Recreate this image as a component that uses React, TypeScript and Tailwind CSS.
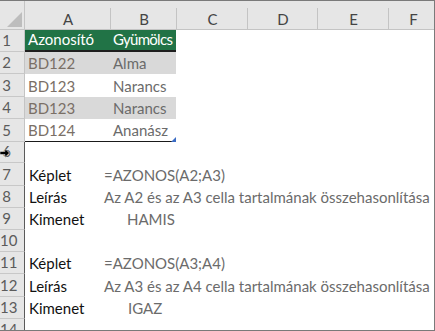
import React from "react";

const FONT = { fontFamily: "Lato, 'Open Sans', sans-serif" };

const rowHeights = [22, 22, 23, 22, 23, 21, 23, 22, 22, 22, 22, 23, 22];

const colHeaders = [
  { label: "A", w: "w-[86px]" },
  { label: "B", w: "w-[66px]" },
  { label: "C", w: "w-[71px]" },
  { label: "D", w: "w-[70px]" },
  { label: "E", w: "w-[71px]" },
];

function RowHeader({ n, dark, h }: { n: number; dark: boolean; h: number }) {
  return (
    <div
      className={`relative flex w-[25px] shrink-0 items-end border-b border-r border-b-[#c8c8c8] bg-[#e6e6e6] pb-[2px] ${
        dark ? "border-r-[#5a5a5a]" : "border-r-[#c4c4c4]"
      }`}
      style={{ height: h }}
    >
      <span className="w-[13px] text-center text-[15px] leading-[18px] text-[#5b5b5b]">{n}</span>
      {n === 6 && (
        <svg className="absolute left-0 top-[6px]" width="10" height="10" viewBox="0 0 10 10">
          <path d="M0 3.4H5V0.6L9.4 5L5 9.4V6.6H0Z" fill="#000" stroke="#fff" strokeWidth="0.5" />
        </svg>
      )}
    </div>
  );
}

function Cell({ children, className = "" }: { children?: React.ReactNode; className?: string }) {
  return <div className={`flex items-end pb-[2px] text-[15px] leading-[18px] whitespace-nowrap ${className}`}>{children}</div>;
}

export default function App() {
  const tableRows = [
    ["BD122", "Alma"],
    ["BD123", "Narancs"],
    ["BD123", "Narancs"],
    ["BD124", "Ananász"],
  ];
  const lower: Record<number, [string, string, string?]> = {
    7: ["Képlet", "=AZONOS(A2;A3)"],
    8: ["Leírás", "Az A2 és az A3 cella tartalmának összehasonlítása"],
    9: ["Kimenet", "HAMIS", "pl-[23px]"],
    11: ["Képlet", "=AZONOS(A3;A4)"],
    12: ["Leírás", "Az A3 és az A4 cella tartalmának összehasonlítása"],
    13: ["Kimenet", "IGAZ", "pl-[24px]"],
  };

  return (
    <div
      className="flex h-[331px] w-[435px] flex-col overflow-hidden border-b border-r border-t border-[#7a7a7a] bg-white"
      style={FONT}
    >
      {/* column headers */}
      <div className="flex h-[29px] shrink-0 border-b border-[#c4c4c4] bg-[#e6e6e6]">
        <div className="relative w-[25px] shrink-0 border-r border-[#c4c4c4]">
          <svg className="absolute left-[7px] top-[11px]" width="16" height="16" viewBox="0 0 16 16">
            <path d="M15 0V15H0Z" fill="#bdbdbd" />
          </svg>
        </div>
        {colHeaders.map((c) => (
          <div key={c.label} className={`relative flex ${c.w} shrink-0 items-end justify-center pb-[1px]`}>
            <span className="text-[15px] leading-[18px] text-[#444]">{c.label}</span>
            <span className="absolute bottom-0 right-0 top-[7px] w-px bg-[#c4c4c4]" />
          </div>
        ))}
        <div className="flex flex-1 items-end justify-center pb-[1px] pl-[4px]">
          <span className="text-[15px] leading-[18px] text-[#444]">F</span>
        </div>
      </div>

      {/* rows */}
      {rowHeights.map((h, i) => {
        const n = i + 1;
        const dark = n >= 6;
        return (
          <div key={n} className="flex shrink-0" style={{ height: h }}>
            <RowHeader n={n} dark={dark} h={h} />
            {n === 1 && (
              <div className="flex h-full w-[151px] border-b-2 border-[#1f1f1f] bg-[#217346] text-white">
                <Cell className="w-[86px] pl-[3px] pb-[1px]">Azonosító</Cell>
                <Cell className="w-[65px] pl-[2px] pb-[1px] tracking-[-0.7px]">Gyümölcs</Cell>
              </div>
            )}
            {n >= 2 && n <= 5 && (
              <div
                className={`relative flex h-full w-[151px] ${n % 2 === 0 ? "bg-[#d9d9d9]" : "bg-white"} ${
                  n === 5 ? "border-b border-[#1a1a1a]" : ""
                }`}
              >
                <Cell className="w-[86px] pl-[3px] text-[#7a6f66]">{tableRows[n - 2][0]}</Cell>
                <Cell className="w-[65px] pl-[2px] text-[#6b6b6b]">{tableRows[n - 2][1]}</Cell>
                {n === 5 && (
                  <svg className="absolute bottom-[-1px] right-0" width="5" height="5" viewBox="0 0 5 5">
                    <path d="M5 0V5H0Z" fill="#3b6cc4" />
                  </svg>
                )}
              </div>
            )}
            {lower[n] && (
              <div className="flex h-full">
                <Cell className="w-[79px] pl-[4px] text-[#111]">{lower[n][0]}</Cell>
                <Cell className={`text-[#6b6b6b] ${lower[n][2] ?? ""}`}>{lower[n][1]}</Cell>
              </div>
            )}
          </div>
        );
      })}
      <div className="flex h-[22px] shrink-0">
        <RowHeader n={14} dark h={22} />
      </div>
    </div>
  );
}
